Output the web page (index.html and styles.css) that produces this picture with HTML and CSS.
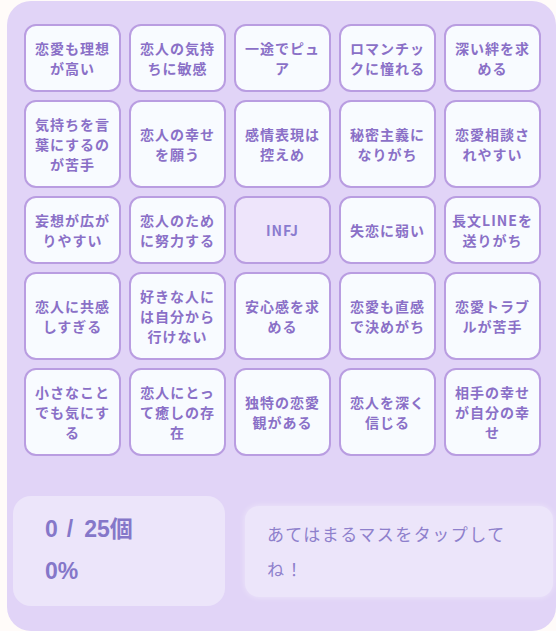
FILE: index.html
```html
<!DOCTYPE html>
<html lang="ja">
<head>
<meta charset="utf-8">
<title>INFJ 恋愛ビンゴ</title>
<link rel="stylesheet" href="styles.css">
</head>
<body>
<div class="page">
  <div class="board">
    <div class="grid">
      <div class="cell">恋愛も理想が高い</div>
      <div class="cell">恋人の気持ちに敏感</div>
      <div class="cell">一途でピュア</div>
      <div class="cell">ロマンチックに憧れる</div>
      <div class="cell">深い絆を求める</div>
      <div class="cell">気持ちを言葉にするのが苦手</div>
      <div class="cell">恋人の幸せを願う</div>
      <div class="cell">感情表現は控えめ</div>
      <div class="cell">秘密主義になりがち</div>
      <div class="cell">恋愛相談されやすい</div>
      <div class="cell">妄想が広がりやすい</div>
      <div class="cell">恋人のために努力する</div>
      <div class="cell center">INFJ</div>
      <div class="cell">失恋に弱い</div>
      <div class="cell">長文LINEを送りがち</div>
      <div class="cell">恋人に共感しすぎる</div>
      <div class="cell">好きな人には自分から行けない</div>
      <div class="cell">安心感を求める</div>
      <div class="cell">恋愛も直感で決めがち</div>
      <div class="cell">恋愛トラブルが苦手</div>
      <div class="cell">小さなことでも気にする</div>
      <div class="cell">恋人にとって癒しの存在</div>
      <div class="cell">独特の恋愛観がある</div>
      <div class="cell">恋人を深く信じる</div>
      <div class="cell">相手の幸せが自分の幸せ</div>
    </div>
    <div class="stats">
      <div class="score">
        <div class="count">0<span class="slash">/</span>25個</div>
        <div class="pct">0%</div>
      </div>
      <div class="hint">あてはまるマスをタップしてね！</div>
    </div>
  </div>
</div>
</body>
</html>
```
FILE: styles.css
```css
html, body {
  margin: 0;
  padding: 0;
  background: #fffbf9;
}

.page {
  padding: 1px 0 0 7px;
}

.board {
  box-sizing: border-box;
  width: 549px;
  height: 630px;
  padding: 23px 15px 25px 17px;
  background: #e1d4f7;
  border-radius: 24px;
}

.grid {
  display: grid;
  grid-template-columns: repeat(5, 97px);
  gap: 8px;
}

.cell {
  box-sizing: border-box;
  display: flex;
  align-items: center;
  justify-content: center;
  text-align: center;
  padding: 12px 6px;
  background: #f8fbff;
  border: 2px solid #b99de1;
  border-radius: 12px;
  font-family: "Noto Sans CJK JP", "Noto Sans", sans-serif;
  font-weight: 700;
  font-size: 14px;
  line-height: 20px;
  letter-spacing: 1px;
  color: #8a70c7;
}

.cell.center {
  background: #eee5fb;
  color: #8a7ccf;
}

.stats {
  display: flex;
  align-items: center;
  gap: 20px;
  margin: 40px -12px 0 -11px;
}

.score {
  box-sizing: border-box;
  width: 212px;
  height: 110px;
  padding: 12px 20px 14px 32px;
  background: #ece5fa;
  border-radius: 18px;
  font-family: "Liberation Sans", "Noto Sans CJK JP", sans-serif;
  font-weight: 700;
  font-size: 23px;
  line-height: 42px;
  color: #8577c9;
}

.slash {
  margin: 0 11px 0 9px;
}

.hint {
  box-sizing: border-box;
  flex: 1;
  height: 91px;
  padding: 10px 40px 11px 22px;
  background: #ece5fa;
  border-radius: 14px;
  box-shadow: 0 0 6px rgba(255, 255, 255, 0.45);
  font-family: "Noto Sans CJK JP", sans-serif;
  font-weight: 400;
  font-size: 17px;
  line-height: 35px;
  letter-spacing: 1.5px;
  color: #8e80cc;
}
```
